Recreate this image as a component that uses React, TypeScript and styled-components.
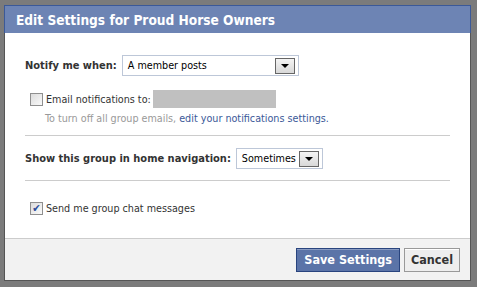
import React from 'react'
import styled, { createGlobalStyle } from 'styled-components'

const Global = createGlobalStyle`
    html, body {
        margin: 0;
        padding: 0;
        background: #7b7b7b;
    }
    body {
        font-family: "DejaVu Sans Condensed", "DejaVu Sans", sans-serif;
        font-size: 10.7px;
        color: #333;
    }
`

const Overlay = styled.div`
    width: 477px;
    height: 287px;
    padding: 5px 0 0 4px;
    box-sizing: border-box;
    background: #7b7b7b;
    overflow: hidden;
`

const Dialog = styled.div`
    width: 467px;
    height: 276px;
    display: flex;
    flex-direction: column;
    background: #fff;
    border: 1px solid #555;
    border-top: none;
    box-sizing: border-box;
`

const Title = styled.div`
    height: 28px;
    margin: 0 -1px;
    padding-left: 11px;
    display: flex;
    align-items: center;
    background: #6d84b4;
    border: 1px solid #3b5998;
    border-bottom: none;
    color: #fff;
    font-weight: bold;
    font-size: 13.6px;
    box-sizing: border-box;
`

const Body = styled.div`
    flex: 1;
    padding: 22px 20px 0 20px;
`

const Row = styled.div`
    display: flex;
    align-items: center;
    gap: 5px;
`

const Label = styled.span`
    font-weight: bold;
    font-size: 11px;
    color: #333;
`

const Select = styled.div<{ w: number }>`
    width: ${p => p.w}px;
    height: 21px;
    box-sizing: border-box;
    border: 1px solid #bdc7d8;
    display: flex;
    align-items: center;
    justify-content: space-between;
    padding: 0 3px 0 5px;
    color: #000;
`

const Arrow = styled.span`
    width: 20px;
    height: 16px;
    flex-shrink: 0;
    box-sizing: border-box;
    border: 1px solid #666;
    background: linear-gradient(#f4f4f4, #d8d8d8);
    display: flex;
    align-items: center;
    justify-content: center;
    &::after {
        content: '';
        border-left: 4px solid transparent;
        border-right: 4px solid transparent;
        border-top: 4px solid #000;
    }
`

const CheckRow = styled.label<{ top: number }>`
    display: flex;
    align-items: center;
    gap: 3px;
    margin: ${p => p.top}px 0 0 5px;
    color: #333;
`

const Box = styled.span`
    width: 13px;
    height: 13px;
    box-sizing: border-box;
    border: 1px solid #8f8f8f;
    background: linear-gradient(135deg, #dcdcdc, #fafafa);
    display: flex;
    align-items: center;
    justify-content: center;
    color: #2b4c9b;
    font-size: 11px;
    line-height: 1;
`

const Email = styled.span`
    width: 123px;
    height: 18px;
    margin-left: -1px;
    background: #c0c0c0;
`

const Hint = styled.div`
    margin: 4px 0 0 20px;
    color: #999;
    a {
        color: #3b5998;
        text-decoration: none;
    }
`

const Divider = styled.hr<{ top: number; bottom: number }>`
    border: none;
    border-top: 1px solid #ccc;
    margin: ${p => p.top}px 0 ${p => p.bottom}px;
`

const Footer = styled.div`
    height: 42px;
    background: #f2f2f2;
    border-top: 1px solid #ccc;
    box-sizing: border-box;
    display: flex;
    justify-content: flex-end;
    align-items: center;
    gap: 4px;
    padding-right: 10px;
`

const Button = styled.button<{ primary?: boolean }>`
    height: 24px;
    padding: 0 ${p => (p.primary ? 7 : 6)}px;
    font-family: "DejaVu Sans Condensed", "DejaVu Sans", sans-serif;
    font-weight: bold;
    font-size: 12.5px;
    border: 1px solid ${p => (p.primary ? '#29447e' : '#999')};
    background: ${p => (p.primary ? '#5b74a8' : '#eee')};
    color: ${p => (p.primary ? '#fff' : '#333')};
    box-shadow: inset 0 1px 0 ${p => (p.primary ? '#8a9cc2' : '#fff')};
`

export default function App() {
    return (
        <>
            <Global />
            <Overlay>
                <Dialog>
                    <Title>Edit Settings for Proud Horse Owners</Title>
                    <Body>
                        <Row>
                            <Label>Notify me when:</Label>
                            <Select w={177}>A member posts<Arrow /></Select>
                        </Row>
                        <CheckRow top={14}>
                            <Box />
                            Email notifications to:
                            <Email />
                        </CheckRow>
                        <Hint>
                            To turn off all group emails, <a href="#">edit your notifications settings.</a>
                        </Hint>
                        <Divider top={10} bottom={12} />
                        <Row>
                            <Label>Show this group in home navigation:</Label>
                            <Select w={87}>Sometimes<Arrow /></Select>
                        </Row>
                        <Divider top={11} bottom={21} />
                        <CheckRow top={0}>
                            <Box>✔</Box>
                            Send me group chat messages
                        </CheckRow>
                    </Body>
                    <Footer>
                        <Button primary>Save Settings</Button>
                        <Button>Cancel</Button>
                    </Footer>
                </Dialog>
            </Overlay>
        </>
    )
}
